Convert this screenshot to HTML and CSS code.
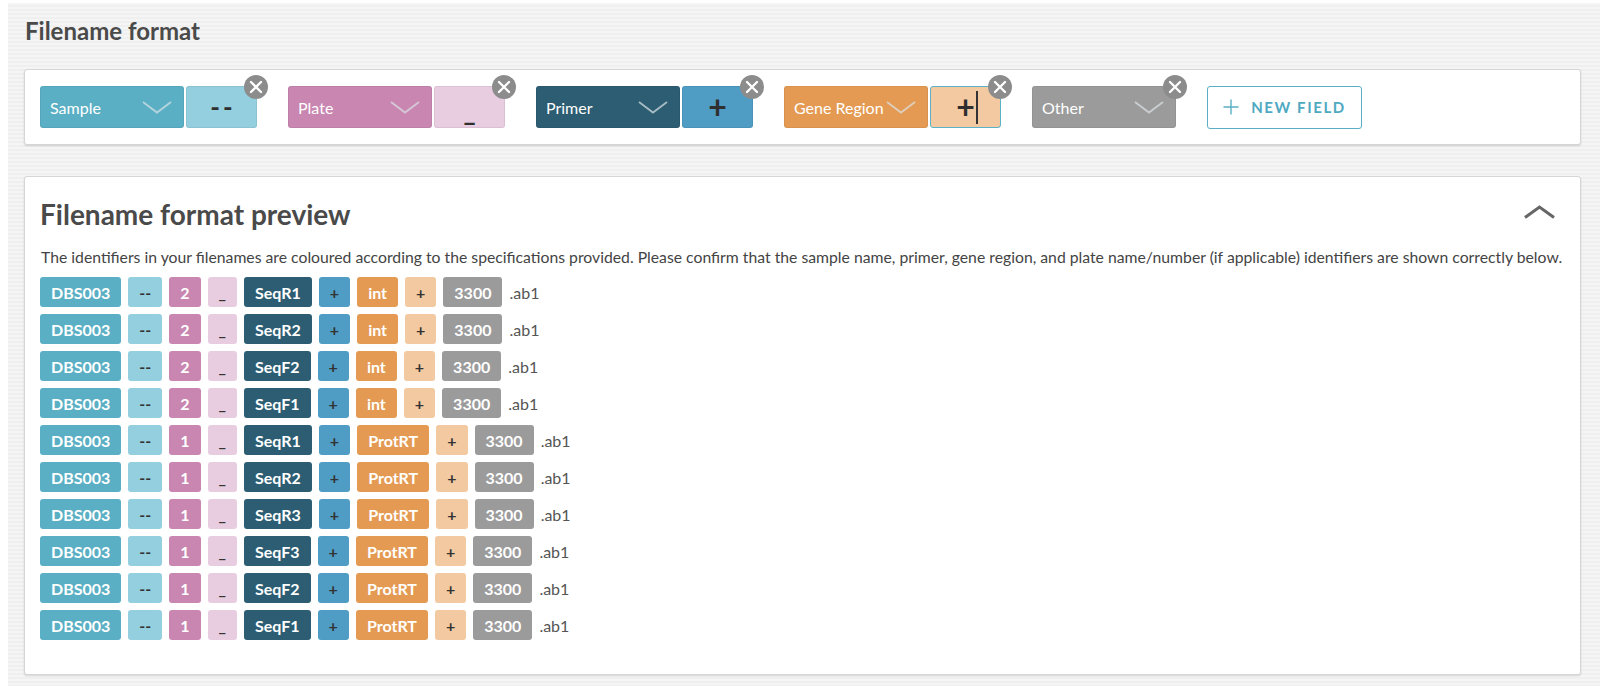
FILE: index.html
```html
<!DOCTYPE html>
<html lang="en">
<head>
    <meta charset="UTF-8">
    <meta name="viewport" content="width=device-width, initial-scale=1.0">
    <title>Filename format</title>
    <link rel="stylesheet" href="styles.css">
</head>
<body>
    <div class="page">
        <h1 class="page-title">Filename format</h1>

        <!-- field builder -->
        <section class="card fields">
            <div class="field">
                <div class="field-select c-sample">Sample
                    <svg class="caret" width="30" height="13" viewBox="0 0 30 13"><polyline points="1,1 15,11.5 29,1"/></svg>
                </div>
                <div class="field-sep c-sample-sep dashes">--</div>
                <button class="remove"><svg width="24" height="24" viewBox="0 0 24 24"><circle cx="12" cy="12" r="12"/><path d="M7 7 L17 17 M17 7 L7 17"/></svg></button>
            </div>
            <div class="field">
                <div class="field-select c-plate">Plate
                    <svg class="caret" width="30" height="13" viewBox="0 0 30 13"><polyline points="1,1 15,11.5 29,1"/></svg>
                </div>
                <div class="field-sep c-plate-sep under">_</div>
                <button class="remove"><svg width="24" height="24" viewBox="0 0 24 24"><circle cx="12" cy="12" r="12"/><path d="M7 7 L17 17 M17 7 L7 17"/></svg></button>
            </div>
            <div class="field">
                <div class="field-select c-primer">Primer
                    <svg class="caret" width="30" height="13" viewBox="0 0 30 13"><polyline points="1,1 15,11.5 29,1"/></svg>
                </div>
                <div class="field-sep c-primer-sep plus">+</div>
                <button class="remove"><svg width="24" height="24" viewBox="0 0 24 24"><circle cx="12" cy="12" r="12"/><path d="M7 7 L17 17 M17 7 L7 17"/></svg></button>
            </div>
            <div class="field">
                <div class="field-select c-gene">Gene Region
                    <svg class="caret" width="30" height="13" viewBox="0 0 30 13"><polyline points="1,1 15,11.5 29,1"/></svg>
                </div>
                <div class="field-sep c-gene-sep plus focused">+<span class="text-cursor"></span></div>
                <button class="remove"><svg width="24" height="24" viewBox="0 0 24 24"><circle cx="12" cy="12" r="12"/><path d="M7 7 L17 17 M17 7 L7 17"/></svg></button>
            </div>
            <div class="field">
                <div class="field-select c-other">Other
                    <svg class="caret" width="30" height="13" viewBox="0 0 30 13"><polyline points="1,1 15,11.5 29,1"/></svg>
                </div>
                <button class="remove"><svg width="24" height="24" viewBox="0 0 24 24"><circle cx="12" cy="12" r="12"/><path d="M7 7 L17 17 M17 7 L7 17"/></svg></button>
            </div>
            <button class="new-field">
                <svg width="16" height="16" viewBox="0 0 16 16"><path d="M8 0.5 V15.5 M0.5 8 H15.5"/></svg>
                NEW FIELD
            </button>
        </section>

        <!-- preview of parsed filenames -->
        <section class="card preview">
            <div class="preview-head">
                <h2>Filename format preview</h2>
                <svg class="toggle" width="33" height="14" viewBox="0 0 33 14"><polyline points="2,12.5 16.5,2 31,12.5"/></svg>
            </div>
            <p class="note">The identifiers in your filenames are coloured according to the specifications provided. Please confirm that the sample name, primer, gene region, and plate name/number (if applicable) identifiers are shown correctly below.</p>

            <div class="rows">
                <div class="row">
                    <span class="tag c-sample">DBS003</span><span class="tag light c-sample-sep">--</span><span class="tag c-plate">2</span><span class="tag light c-plate-sep">_</span><span class="tag c-primer">SeqR1</span><span class="tag light c-primer-sep">+</span><span class="tag c-gene">int</span><span class="tag light c-gene-sep">+</span><span class="tag c-other">3300</span><span class="ext">.ab1</span>
                </div>
                <div class="row">
                    <span class="tag c-sample">DBS003</span><span class="tag light c-sample-sep">--</span><span class="tag c-plate">2</span><span class="tag light c-plate-sep">_</span><span class="tag c-primer">SeqR2</span><span class="tag light c-primer-sep">+</span><span class="tag c-gene">int</span><span class="tag light c-gene-sep">+</span><span class="tag c-other">3300</span><span class="ext">.ab1</span>
                </div>
                <div class="row">
                    <span class="tag c-sample">DBS003</span><span class="tag light c-sample-sep">--</span><span class="tag c-plate">2</span><span class="tag light c-plate-sep">_</span><span class="tag c-primer">SeqF2</span><span class="tag light c-primer-sep">+</span><span class="tag c-gene">int</span><span class="tag light c-gene-sep">+</span><span class="tag c-other">3300</span><span class="ext">.ab1</span>
                </div>
                <div class="row">
                    <span class="tag c-sample">DBS003</span><span class="tag light c-sample-sep">--</span><span class="tag c-plate">2</span><span class="tag light c-plate-sep">_</span><span class="tag c-primer">SeqF1</span><span class="tag light c-primer-sep">+</span><span class="tag c-gene">int</span><span class="tag light c-gene-sep">+</span><span class="tag c-other">3300</span><span class="ext">.ab1</span>
                </div>
                <div class="row">
                    <span class="tag c-sample">DBS003</span><span class="tag light c-sample-sep">--</span><span class="tag c-plate">1</span><span class="tag light c-plate-sep">_</span><span class="tag c-primer">SeqR1</span><span class="tag light c-primer-sep">+</span><span class="tag c-gene">ProtRT</span><span class="tag light c-gene-sep">+</span><span class="tag c-other">3300</span><span class="ext">.ab1</span>
                </div>
                <div class="row">
                    <span class="tag c-sample">DBS003</span><span class="tag light c-sample-sep">--</span><span class="tag c-plate">1</span><span class="tag light c-plate-sep">_</span><span class="tag c-primer">SeqR2</span><span class="tag light c-primer-sep">+</span><span class="tag c-gene">ProtRT</span><span class="tag light c-gene-sep">+</span><span class="tag c-other">3300</span><span class="ext">.ab1</span>
                </div>
                <div class="row">
                    <span class="tag c-sample">DBS003</span><span class="tag light c-sample-sep">--</span><span class="tag c-plate">1</span><span class="tag light c-plate-sep">_</span><span class="tag c-primer">SeqR3</span><span class="tag light c-primer-sep">+</span><span class="tag c-gene">ProtRT</span><span class="tag light c-gene-sep">+</span><span class="tag c-other">3300</span><span class="ext">.ab1</span>
                </div>
                <div class="row">
                    <span class="tag c-sample">DBS003</span><span class="tag light c-sample-sep">--</span><span class="tag c-plate">1</span><span class="tag light c-plate-sep">_</span><span class="tag c-primer">SeqF3</span><span class="tag light c-primer-sep">+</span><span class="tag c-gene">ProtRT</span><span class="tag light c-gene-sep">+</span><span class="tag c-other">3300</span><span class="ext">.ab1</span>
                </div>
                <div class="row">
                    <span class="tag c-sample">DBS003</span><span class="tag light c-sample-sep">--</span><span class="tag c-plate">1</span><span class="tag light c-plate-sep">_</span><span class="tag c-primer">SeqF2</span><span class="tag light c-primer-sep">+</span><span class="tag c-gene">ProtRT</span><span class="tag light c-gene-sep">+</span><span class="tag c-other">3300</span><span class="ext">.ab1</span>
                </div>
                <div class="row">
                    <span class="tag c-sample">DBS003</span><span class="tag light c-sample-sep">--</span><span class="tag c-plate">1</span><span class="tag light c-plate-sep">_</span><span class="tag c-primer">SeqF1</span><span class="tag light c-primer-sep">+</span><span class="tag c-gene">ProtRT</span><span class="tag light c-gene-sep">+</span><span class="tag c-other">3300</span><span class="ext">.ab1</span>
                </div>
            </div>
        </section>
    </div>
</body>
</html>
```

FILE: styles.css
```css
* {
    box-sizing: border-box;
}

body {
    margin: 0;
    background: #fff;
    font-family: Lato, "Open Sans", Arial, sans-serif;
    color: #444;
}

.page {
    margin: 3px 0 0 8px;
    min-height: 683px;
    padding: 14px 19px 13px 16px;
    background: repeating-linear-gradient(to bottom, #f5f5f5 0, #f5f5f5 2px, #efefef 2px, #efefef 4px);
}

.page-title {
    margin: 0 0 23px 1px;
    font-size: 24px;
    font-weight: 700;
    line-height: 1.2;
    color: #4a4a4a;
}

.card {
    background: #fff;
    border: 1px solid #d6d6d6;
    border-radius: 3px;
    box-shadow: 0 1px 2px rgba(0, 0, 0, 0.14);
}

/* colours per identifier type */
.c-sample { background: #5aafc4; }
.c-sample-sep { background: #94cfdf; }
.c-plate { background: #c886b0; }
.c-plate-sep { background: #e8cde0; }
.c-primer { background: #2c5d72; }
.c-primer-sep { background: #4f9dc4; }
.c-gene { background: #e49a52; }
.c-gene-sep { background: #f2c9a0; }
.c-other { background: #9b9b9b; }

/* field builder */
.fields {
    display: flex;
    align-items: center;
    gap: 31px;
    padding: 16px 15px 15px;
}

.field {
    position: relative;
    display: flex;
    gap: 2px;
}

.field-select {
    width: 144px;
    height: 42px;
    display: flex;
    align-items: center;
    justify-content: space-between;
    padding: 0 11px 0 9px;
    border-radius: 3px;
    border: 1px solid rgba(0, 0, 0, 0.05);
    color: #fff;
    font-size: 16px;
}

.caret polyline {
    fill: none;
    stroke: rgba(220, 228, 232, 0.7);
    stroke-width: 1.8;
}

.field-sep {
    position: relative;
    width: 71px;
    height: 42px;
    display: flex;
    align-items: center;
    justify-content: center;
    border-radius: 3px;
    border: 1px solid rgba(0, 0, 0, 0.06);
    color: #2f2f2f;
    font-size: 26px;
    font-weight: 700;
    line-height: 1;
}

.field-sep.dashes {
    letter-spacing: 3px;
    padding-left: 3px;
}

.field-sep.under {
    align-items: flex-end;
    padding-bottom: 3px;
}

.field-sep.plus {
    font-size: 32px;
}

.field-sep.focused {
    border-color: #5ab2c7;
}

.text-cursor {
    position: absolute;
    left: 45px;
    top: 4px;
    width: 2px;
    height: 33px;
    background: #333;
}

.remove {
    position: absolute;
    top: -11px;
    right: -11px;
    width: 24px;
    height: 24px;
    padding: 0;
    border: 0;
    background: none;
}

.remove circle {
    fill: #8c8c8c;
}

.remove path {
    stroke: #fff;
    stroke-width: 2.4;
    stroke-linecap: round;
}

.new-field {
    width: 155px;
    height: 43px;
    display: flex;
    align-items: center;
    justify-content: center;
    gap: 12px;
    padding: 0;
    border: 1px solid #5aafc4;
    border-radius: 3px;
    background: #fff;
    color: #4fa9c1;
    font-family: inherit;
    font-size: 15px;
    font-weight: 700;
    letter-spacing: 1.6px;
}

.new-field path {
    stroke: #5aafc4;
    stroke-width: 1.4;
}

/* preview */
.preview {
    margin-top: 31px;
    padding: 21px 15px 34px;
}

.preview-head {
    display: flex;
    justify-content: space-between;
    align-items: flex-start;
}

.preview-head h2 {
    margin: 0;
    font-size: 28px;
    font-weight: 700;
    line-height: 1.2;
    color: #4a4a4a;
}

.toggle {
    margin: 7px 9px 0 0;
}

.toggle polyline {
    fill: none;
    stroke: #666;
    stroke-width: 3;
}

.note {
    margin: 15px 0 10px 1px;
    font-size: 15.75px;
    line-height: 21px;
    white-space: nowrap;
    color: #444;
}

.rows {
    display: flex;
    flex-direction: column;
    gap: 7px;
}

.row {
    display: flex;
    align-items: center;
    gap: 7px;
}

.tag {
    height: 30px;
    display: flex;
    align-items: center;
    padding: 0 11px;
    border-radius: 3px;
    color: #fff;
    font-size: 16px;
    font-weight: 700;
}

.tag.light {
    color: #333;
}

.ext {
    font-size: 16px;
    color: #555;
}
```
